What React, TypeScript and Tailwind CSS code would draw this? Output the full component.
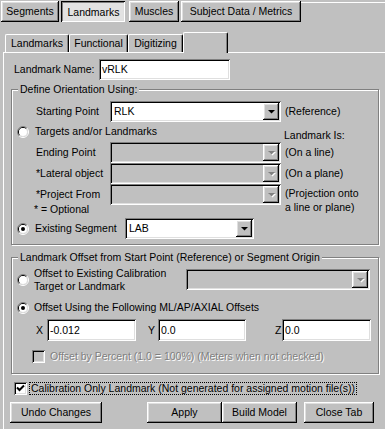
import React from "react";

const raised =
  "shadow-[inset_-1px_-1px_0_#000,inset_1px_1px_0_#fff,inset_-2px_-2px_0_#808080,inset_2px_2px_0_#dfdfdf]";
const sunken =
  "shadow-[inset_1px_1px_0_#808080,inset_-1px_-1px_0_#fff,inset_2px_2px_0_#000,inset_-2px_-2px_0_#dfdfdf]";
const etched = "border border-[#808080] shadow-[inset_1px_1px_0_#fff,1px_1px_0_#fff]";
const disabledText = "text-[#808080] [text-shadow:1px_1px_0_#fff]";

function Arrow({ disabled }: { disabled?: boolean }) {
  return (
    <div className={`w-[16px] h-[17px] bg-[#c0c0c0] flex items-center justify-center ${raised}`}>
      <svg width="7" height="4" viewBox="0 0 7 4" className="overflow-visible">
        {disabled && <polygon points="1,1 8,1 4.5,4.5" fill="#fff" />}
        <polygon points="0,0 7,0 3.5,3.5" fill={disabled ? "#808080" : "#000"} />
      </svg>
    </div>
  );
}

function Combo({ value, width, disabled }: { value?: string; width: string; disabled?: boolean }) {
  return (
    <div
      className={`${width} h-[21px] flex items-center justify-between pl-[4px] pr-[2px] ${
        disabled ? "bg-[#c0c0c0]" : "bg-white"
      } ${sunken}`}
    >
      <span>{value}</span>
      <Arrow disabled={disabled} />
    </div>
  );
}

function Edit({ value, width, height = "h-[21px]" }: { value: string; width: string; height?: string }) {
  return (
    <div className={`${width} ${height} bg-white flex items-center pl-[3px] ${sunken}`}>
      <span>{value}</span>
    </div>
  );
}

function Radio({ checked }: { checked?: boolean }) {
  return (
    <svg width="12" height="12" viewBox="0 0 12 12" className="shrink-0">
      <path d="M2.1 9.9 A5.5 5.5 0 0 1 9.9 2.1" fill="none" stroke="#808080" />
      <path d="M9.9 2.1 A5.5 5.5 0 0 1 2.1 9.9" fill="none" stroke="#fff" />
      <path d="M2.8 9.2 A4.5 4.5 0 0 1 9.2 2.8" fill="none" stroke="#000" />
      <path d="M9.2 2.8 A4.5 4.5 0 0 1 2.8 9.2" fill="none" stroke="#dfdfdf" />
      <circle cx="6" cy="6" r="4" fill="#fff" />
      {checked && <circle cx="6" cy="6" r="2" fill="#000" />}
    </svg>
  );
}

function Check({ checked, disabled }: { checked?: boolean; disabled?: boolean }) {
  return (
    <div className={`w-[13px] h-[13px] shrink-0 ${disabled ? "bg-[#c0c0c0]" : "bg-white"} ${sunken}`}>
      {checked && (
        <svg width="13" height="13" viewBox="0 0 13 13">
          <polyline points="3,5.5 5.5,8 10,3.5" fill="none" stroke="#000" strokeWidth="2" />
        </svg>
      )}
    </div>
  );
}

function Button({ label, width, pressed }: { label: string; width: string; pressed?: boolean }) {
  return (
    <div
      className={`${width} h-[21px] flex items-center justify-center ${
        pressed
          ? "bg-[#e2e2e2] shadow-[inset_1px_1px_0_#000,inset_-1px_-1px_0_#fff,inset_2px_2px_0_#808080,inset_-2px_-2px_0_#dfdfdf] pt-[1px] pl-[1px]"
          : `bg-[#c0c0c0] ${raised}`
      }`}
    >
      {label}
    </div>
  );
}

function SubTab({ label, width }: { label: string; width: string }) {
  return (
    <div
      className={`${width} h-[18px] flex items-center justify-center border-t border-l border-white rounded-tl-[2px] rounded-tr-[2px] shadow-[inset_-1px_0_0_#808080] border-r border-r-black`}
    >
      {label}
    </div>
  );
}

function Group({ legend, className, children }: { legend: string; className: string; children: React.ReactNode }) {
  return (
    <div className={`relative ${etched} ${className}`}>
      <span className="absolute -top-[7px] left-[6px] px-[2px] bg-[#c0c0c0] leading-[13px]">{legend}</span>
      {children}
    </div>
  );
}

export default function App() {
  return (
    <div className="w-[385px] h-[429px] overflow-hidden bg-[#c0c0c0] text-black text-[10.5px] leading-[13px] font-['Liberation_Sans',Arial,sans-serif] pt-[1px]">
      {/* top tab buttons */}
      <div className="flex h-[21px] pl-[1px]">
        <Button label="Segments" width="w-[58px]" />
        <div className="ml-[2px]">
          <Button label="Landmarks" width="w-[64px]" pressed />
        </div>
        <div className="ml-[4px]">
          <Button label="Muscles" width="w-[50px]" />
        </div>
        <div className="ml-[2px]">
          <Button label="Subject Data / Metrics" width="w-[120px]" />
        </div>
        <div className="flex-1 h-px mt-[1px] bg-white" />
      </div>

      {/* sub tabs */}
      <div className="flex items-end h-[30px] pl-[5px]">
        <SubTab label="Landmarks" width="w-[64px]" />
        <SubTab label="Functional" width="w-[59px]" />
        <SubTab label="Digitizing" width="w-[55px]" />
        <div className="w-[45px] h-[21px] -mb-[1px] bg-[#c0c0c0] relative border-t border-l border-white rounded-tl-[2px] rounded-tr-[2px] border-r border-r-black shadow-[inset_-1px_0_0_#808080]" />
      </div>

      {/* panel */}
      <div className="ml-[3px] w-[400px] h-[380px] border-t border-l border-white">
        <div className="flex items-center h-[21px] mt-[6px] pl-[10px]">
          <span className="w-[85px]">Landmark Name:</span>
          <Edit value="vRLK" width="w-[131px]" />
        </div>

        <Group legend="Define Orientation Using:" className="ml-[7px] mt-[9px] w-[368px] h-[156px]">
          <div className="flex items-center h-[21px] mt-[11px] pl-[24px]">
            <span className="w-[74px]">Starting Point</span>
            <Combo value="RLK" width="w-[171px]" />
            <span className="ml-[4px]">(Reference)</span>
          </div>

          <div className="flex h-[20px]">
            <div className="w-[272px] flex items-center h-[13px] mt-[3px] pl-[5px]">
              <Radio />
              <span className="ml-[6px] whitespace-nowrap">Targets and/or Landmarks</span>
            </div>
            <span className="mt-[7px]">Landmark Is:</span>
          </div>

          <div className="flex items-center h-[21px] pl-[24px]">
            <span className="w-[74px]">Ending Point</span>
            <Combo width="w-[171px]" disabled />
            <span className="ml-[4px]">(On a line)</span>
          </div>
          <div className="flex items-center h-[21px] pl-[24px]">
            <span className="w-[74px]">*Lateral object</span>
            <Combo width="w-[171px]" disabled />
            <span className="ml-[4px]">(On a plane)</span>
          </div>
          <div className="flex items-start h-[21px] pl-[24px]">
            <span className="w-[74px] mt-[4px]">*Project From</span>
            <Combo width="w-[171px]" disabled />
            <span className="ml-[4px] mt-[2px] leading-[14px]">
              (Projection onto
              <br />a line or plane)
            </span>
          </div>
          <div className="h-[13px] -mt-[2px] pl-[22px]">* = Optional</div>

          <div className="flex items-center h-[21px] mt-[2px]">
            <div className="w-[113px] flex items-center pl-[5px]">
              <Radio checked />
              <span className="ml-[6px]">Existing Segment</span>
            </div>
            <Combo value="LAB" width="w-[129px]" />
          </div>
        </Group>

        <Group
          legend="Landmark Offset from Start Point (Reference) or Segment Origin"
          className="ml-[7px] mt-[12px] w-[368px] h-[117px]"
        >
          <div className="flex items-start mt-[9px]">
            <div className="w-[174px] h-[26px] flex items-center pl-[5px]">
              <Radio />
              <span className="ml-[5px]">
                Offset to Existing Calibration
                <br />
                Target or Landmark
              </span>
            </div>
            <div className="mt-[2px]">
              <Combo width="w-[184px]" disabled />
            </div>
          </div>

          <div className="flex items-center h-[13px] mt-[8px] pl-[5px]">
            <Radio checked />
            <span className="ml-[5px]">Offset Using the Following ML/AP/AXIAL Offsets</span>
          </div>

          <div className="flex items-center h-[22px] mt-[5px] pl-[24px]">
            <span className="w-[11px]">X</span>
            <Edit value="-0.012" width="w-[89px]" height="h-[22px]" />
            <span className="ml-[12px] w-[10px]">Y</span>
            <Edit value="0.0" width="w-[88px]" height="h-[22px]" />
            <span className="ml-[29px] w-[7px]">Z</span>
            <Edit value="0.0" width="w-[89px]" height="h-[22px]" />
          </div>

          <div className="flex items-center h-[13px] mt-[9px] pl-[20px]">
            <Check disabled />
            <span className={`ml-[5px] ${disabledText}`}>
              Offset by Percent (1.0 = 100%) (Meters when not checked)
            </span>
          </div>
        </Group>

        <div className="flex items-center h-[13px] mt-[8px] pl-[10px]">
          <Check checked />
          <span className="ml-[2px] px-[1px] border border-dotted border-black whitespace-nowrap leading-[11px]">
            Calibration Only Landmark (Not generated for assigned motion file(s))
          </span>
        </div>

        <div className="flex mt-[7px] pl-[6px]">
          <Button label="Undo Changes" width="w-[92px]" />
          <div className="ml-[45px] flex">
            <Button label="Apply" width="w-[75px]" />
            <Button label="Build Model" width="w-[75px]" />
          </div>
          <div className="ml-[7px]">
            <Button label="Close Tab" width="w-[70px]" />
          </div>
        </div>
      </div>
    </div>
  );
}
